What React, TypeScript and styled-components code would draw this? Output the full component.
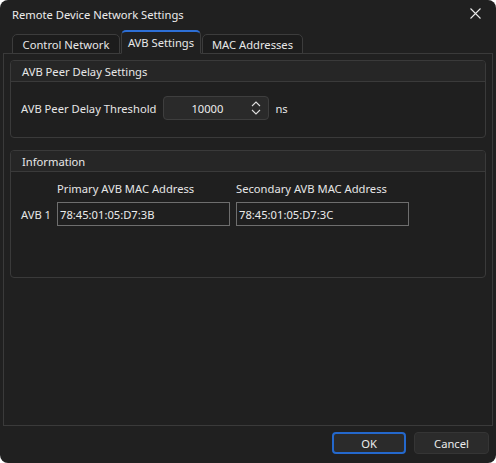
import React from "react";
import styled, { createGlobalStyle } from "styled-components";

const Global = createGlobalStyle`
  html, body { margin: 0; padding: 0; background: #ffffff; }
  * { box-sizing: border-box; }
  body { font-family: "Noto Sans", "Open Sans", sans-serif; font-size: 11px; color: #e6e6e6; }
`;

const Window = styled.div`
  width: 496px;
  height: 463px;
  background: #202020;
  border-radius: 8px;
  display: flex;
  flex-direction: column;
  overflow: hidden;
`;

const TitleBar = styled.div`
  height: 31px;
  display: flex;
  align-items: center;
  padding-left: 12px;
  padding-right: 14px;
  justify-content: space-between;
  flex-shrink: 0;
`;

const Title = styled.div`
  font-size: 11.2px;
  color: #ececec;
  margin-top: -3px;
`;

const CloseBtn = styled.div`
  width: 14px;
  height: 14px;
  display: flex;
  align-items: center;
  justify-content: center;
  margin-top: -4px;
`;

const TabBar = styled.div`
  display: flex;
  align-items: flex-end;
  height: 23px;
  padding-left: 12px;
  flex-shrink: 0;
  position: relative;
  z-index: 1;
  margin-bottom: -1px;
`;

const Tab = styled.div<{ $active?: boolean; $w: number }>`
  width: ${(p) => p.$w}px;
  height: ${(p) => (p.$active ? 24 : 20)}px;
  margin-right: 1px;
  border: 1px solid #3c3c3c;
  border-bottom: ${(p) => (p.$active ? "1px solid #202020" : "1px solid #3c3c3c")};
  border-top: ${(p) => (p.$active ? "2px solid #2d6fd6" : "1px solid #3c3c3c")};
  border-radius: 5px 5px 0 0;
  background: ${(p) => (p.$active ? "#202020" : "#1c1c1c")};
  display: flex;
  align-items: center;
  justify-content: center;
  font-size: 11.2px;
  color: #e8e8e8;
  padding-top: ${(p) => (p.$active ? 0 : 1)}px;
`;

const Pane = styled.div`
  margin: 0 3px;
  height: 373px;
  border: 1px solid #3a3a3a;
  padding: 6px 6px;
  display: flex;
  flex-direction: column;
  gap: 12px;
  flex-shrink: 0;
`;

const Group = styled.div<{ $h: number }>`
  height: ${(p) => p.$h}px;
  border: 1px solid #3a3a3a;
  border-radius: 4px;
  background: #1f1f1f;
  display: flex;
  flex-direction: column;
  overflow: hidden;
  flex-shrink: 0;
`;

const GroupHeader = styled.div`
  height: 21px;
  padding-left: 11px;
  border-bottom: 1px solid #3a3a3a;
  background: #262626;
  display: flex;
  align-items: center;
  font-size: 11.2px;
  color: #e8e8e8;
  flex-shrink: 0;
`;

const DelayRow = styled.div`
  display: flex;
  align-items: center;
  padding: 14px 0 0 10px;
`;

const Label = styled.div`
  font-size: 11.2px;
  color: #e6e6e6;
`;

const SpinBox = styled.div`
  margin-left: 7px;
  width: 106px;
  height: 24px;
  border: 1px solid #3e3e3e;
  border-radius: 4px;
  background: #2a2a2a;
  display: flex;
  align-items: center;
`;

const SpinValue = styled.div`
  flex: 1;
  text-align: center;
  padding-left: 3px;
  font-size: 11.2px;
  color: #ececec;
`;

const SpinArrows = styled.div`
  width: 18px;
  display: flex;
  align-items: center;
  justify-content: center;
  margin-right: 3px;
`;

const Unit = styled.div`
  margin-left: 6px;
  font-size: 11.2px;
  color: #e6e6e6;
`;

const InfoGrid = styled.div`
  display: grid;
  grid-template-columns: 30px 173px 173px;
  column-gap: 6px;
  row-gap: 4px;
  padding: 6px 0 0 10px;
  align-items: center;
`;

const ColHead = styled.div`
  font-size: 11.2px;
  color: #e6e6e6;
  height: 20px;
  display: flex;
  align-items: center;
`;

const Field = styled.div`
  height: 24px;
  border: 1px solid #6e6e6e;
  background: #1f1f1f;
  display: flex;
  align-items: center;
  padding-left: 2px;
  font-size: 11.2px;
  color: #ececec;
`;

const Footer = styled.div`
  flex: 1;
  display: flex;
  justify-content: flex-end;
  align-items: flex-start;
  gap: 8px;
  padding: 6px 7px 0 0;
`;

const Button = styled.div<{ $primary?: boolean }>`
  width: ${(p) => (p.$primary ? 74 : 75)}px;
  height: 22px;
  border-radius: 4px;
  background: #2b2b2b;
  border: ${(p) => (p.$primary ? "2px solid #2468cc" : "1px solid #353535")};
  display: flex;
  align-items: center;
  justify-content: center;
  font-size: 11.2px;
  color: #ececec;
`;

export default function App() {
  return (
    <>
      <Global />
      <Window>
        <TitleBar>
          <Title>Remote Device Network Settings</Title>
          <CloseBtn>
            <svg width="11" height="11" viewBox="0 0 11 11">
              <path d="M0.5 0.5 L10.5 10.5 M10.5 0.5 L0.5 10.5" stroke="#e8e8e8" strokeWidth="1.1" />
            </svg>
          </CloseBtn>
        </TitleBar>
        <TabBar>
          <Tab $w={108}>Control Network</Tab>
          <Tab $w={80} $active>AVB Settings</Tab>
          <Tab $w={101}>MAC Addresses</Tab>
        </TabBar>
        <Pane>
          <Group $h={78}>
            <GroupHeader>AVB Peer Delay Settings</GroupHeader>
            <DelayRow>
              <Label>AVB Peer Delay Threshold</Label>
              <SpinBox>
                <SpinValue>10000</SpinValue>
                <SpinArrows>
                  <svg width="10" height="16" viewBox="0 0 10 16">
                    <path d="M1 6 L5 2 L9 6" fill="none" stroke="#dcdcdc" strokeWidth="1.1" />
                    <path d="M1 10 L5 14 L9 10" fill="none" stroke="#dcdcdc" strokeWidth="1.1" />
                  </svg>
                </SpinArrows>
              </SpinBox>
              <Unit>ns</Unit>
            </DelayRow>
          </Group>
          <Group $h={128}>
            <GroupHeader>Information</GroupHeader>
            <InfoGrid>
              <div />
              <ColHead>Primary AVB MAC Address</ColHead>
              <ColHead>Secondary AVB MAC Address</ColHead>
              <Label>AVB 1</Label>
              <Field>78:45:01:05:D7:3B</Field>
              <Field>78:45:01:05:D7:3C</Field>
            </InfoGrid>
          </Group>
        </Pane>
        <Footer>
          <Button $primary>OK</Button>
          <Button>Cancel</Button>
        </Footer>
      </Window>
    </>
  );
}
